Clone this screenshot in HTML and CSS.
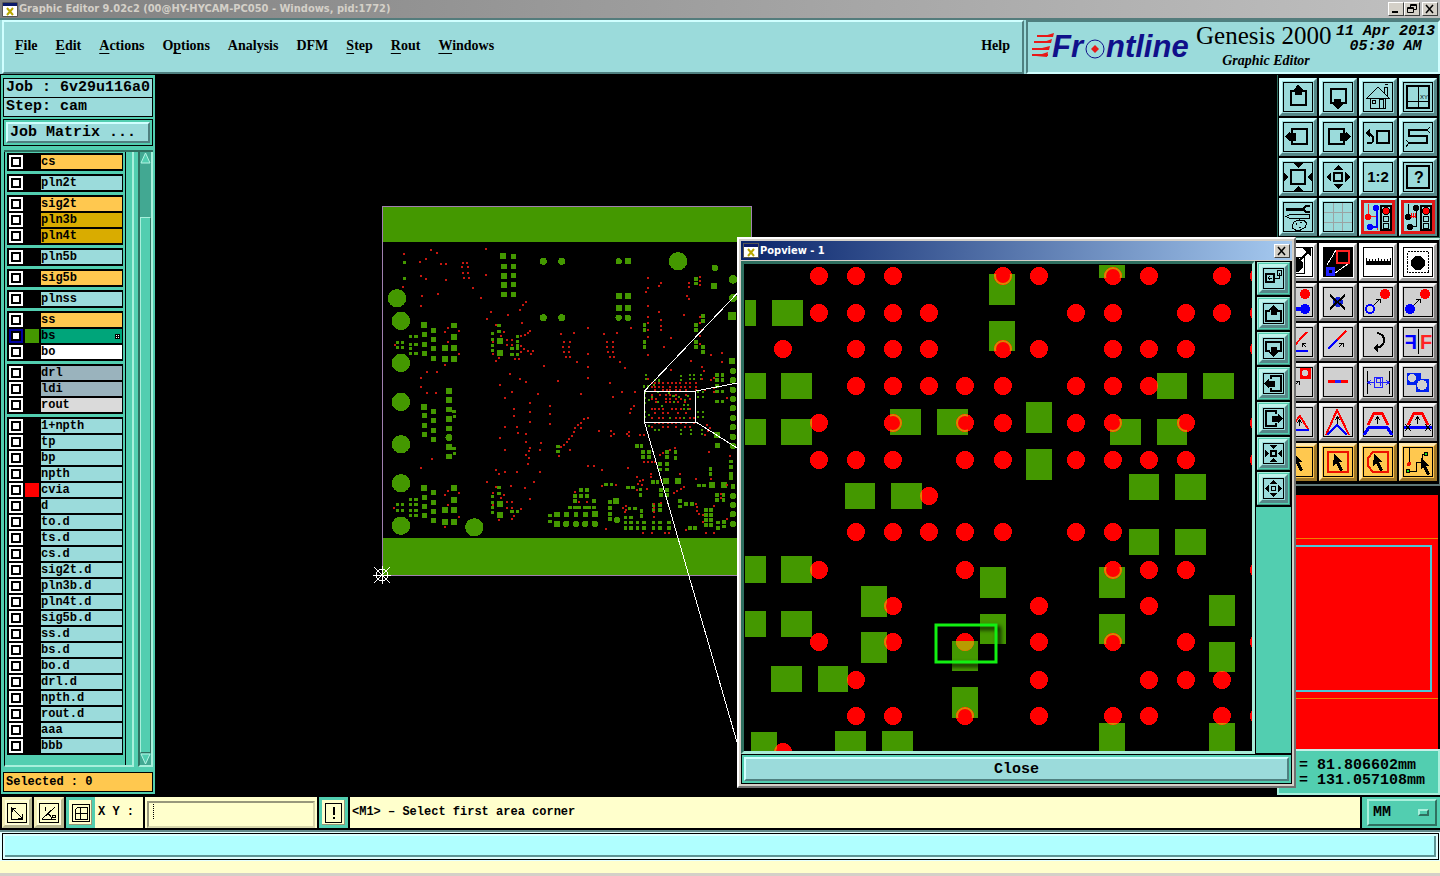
FILE: index.html
```
<!DOCTYPE html>
<html lang="en">
<head>
  <meta charset="utf-8">
  <title>Graphic Editor 9.02c2</title>
  <link rel="stylesheet" href="styles.css">
</head>
<body>
<div class="app">
  <header class="titlebar">
    <svg class="app-icon" viewBox="0 0 16 15"><path fill="#fff" stroke="#555" d="M.5.5h15v14H.5z"/><path fill="#0a1a6a" d="M1 1h14v3H1z"/><path stroke="#b8a800" stroke-width="2" d="M5 6l6 7M11 6l-6 7"/></svg>
    <span class="title">Graphic Editor 9.02c2 (00@HY-HYCAM-PC050 - Windows, pid:1772)</span>
    <div class="win-buttons">
      <button class="win-btn" aria-label="Minimize"><svg viewBox="0 0 12 10"><path fill="#000" d="M2 7h6v2H2z"/></svg></button>
      <button class="win-btn" aria-label="Restore"><svg viewBox="0 0 12 10"><path fill="none" stroke="#000" d="M4.500 3V.5h6v5H8M4 1.500h7M1.500 3.500h6v5h-6zM1 4.500h7"/></svg></button>
      <button class="win-btn last" aria-label="Close"><svg viewBox="0 0 12 10"><path stroke="#000" stroke-width="1.500" d="M2 1l7 8M9 1L2 9"/></svg></button>
    </div>
  </header>

  <div class="topbar">
    <nav class="menubar">
      <button><u>F</u>ile</button>
      <button><u>E</u>dit</button>
      <button><u>A</u>ctions</button>
      <button>O<u>p</u>tions</button>
      <button>Analysis</button>
      <button>DFM</button>
      <button><u>S</u>tep</button>
      <button><u>R</u>out</button>
      <button><u>W</u>indows</button>
      <button class="help">Help</button>
    </nav>
    <div class="brand">
      <svg class="logo" width="162" height="40" viewBox="0 0 162 40">
        <g fill="#e81818">
          <path d="M12 10l10-3-1 4zM9 17l11-4-1 4zM6 23l12-3-1 4zM4 30l12-4-1 5z"/>
          <path d="M5 9h16v2H5zM2 15h17v2H2zM0 22h17v2H0zM0 28h16v2H0z"/>
        </g>
        <g class="logo-text"><text x="20" y="31">Fr</text><text x="74" y="31">ntline</text></g>
        <circle cx="63" cy="23" r="9" fill="none" stroke="#10108a"/>
        <path fill="#e81818" d="M63 19l4 4-4 4-4-4z"/>
      </svg>
      <div class="product">
        <div class="product-name">Genesis 2000</div>
        <div class="product-sub">Graphic Editor</div>
      </div>
      <div class="clock">11 Apr 2013<br>05:30 AM</div>
    </div>
  </div>

  <main class="work">
    <aside class="left">
      <div class="info">Job : 6v29u116a0</div>
      <div class="info step">Step: cam</div>
      <div class="matrix"><button>Job Matrix ...</button></div>
      <div class="layer-pane">
        <div class="layers" id="layers"></div>
        <div class="scroll-track">
          <svg viewBox="0 0 11 12"><path fill="#52ceb0" stroke="#b4f4e4" d="M5.500 1L1 11h9z"/></svg>
          <div class="thumb"></div>
          <svg viewBox="0 0 11 12"><path fill="#52ceb0" stroke="#b4f4e4" d="M5.500 11L1 1h9z"/></svg>
        </div>
      </div>
      <div class="selected">Selected : 0</div>
    </aside>

    <section class="canvas">
      <svg width="1122" height="722" viewBox="0 0 1122 722" shape-rendering="crispEdges">
        <path fill="#449800" d="M227 131h370v36H227zM227 463h370v37H227z"/>
        <path class="outline" d="M227.500 131.500h369v369h-369z"/>
        <g transform="translate(225 125) scale(.333333)" id="boardLeft"></g>
        <g transform="translate(405 125) scale(.333333)" id="boardRight"></g>
        <path class="leader" d="M489.500 316.500h51v31h-51zM489.500 316l93-98M541 316l41-8M541 347l41 26M489.500 347l93 322"/>
        <g class="origin"><circle cx="227" cy="500" r="6"/><path d="M218 500h18M227 491v18M219 492l16 16M235 492l-16 16"/></g>
      </svg>
    </section>

    <aside class="right">
      <div class="tools">
        <button class="tool" aria-label="Pan up"><svg viewBox="0 0 30 30"><path class="box" d="M.5.5h29v29H.5z"/><path class="k2" d="M8 9h15v14H8z"/><path d="M15 2l5 6h-1v5h-7V8h-1z"/></svg></button>
        <button class="tool" aria-label="Pan down"><svg viewBox="0 0 30 30"><path class="box" d="M.5.5h29v29H.5z"/><path class="k2" d="M8 7h15v14H8z"/><path d="M15 28l-5-6h1v-5h7v5h2z"/></svg></button>
        <button class="tool" aria-label="Home"><svg viewBox="0 0 30 30"><path class="box" d="M.5.5h29v29H.5z"/><path class="k1" d="M4 16L15 5l11 11zM7.500 16v10.500h15V16M16.500 26v-9h4v9M9.500 18.500h3v3h-3zM21.500 11V5.500h3V14M22 3l3-1"/></svg></button>
        <button class="tool" aria-label="Origin view"><svg viewBox="0 0 30 30"><path class="box" d="M.5.5h29v29H.5z"/><path class="k2" d="M4 4h22v22H4z"/><path class="k1" d="M15.500 4v22M4 19.500h22"/><text class="tiny" x="17" y="17">XY</text></svg></button>

        <button class="tool" aria-label="Pan left"><svg viewBox="0 0 30 30"><path class="box" d="M.5.5h29v29H.5z"/><path class="k2" d="M9 7h15v15H9z"/><path d="M2 14.500l5-5v1h6v8H7v1z"/></svg></button>
        <button class="tool" aria-label="Pan right"><svg viewBox="0 0 30 30"><path class="box" d="M.5.5h29v29H.5z"/><path class="k2" d="M6 7h15v15H6z"/><path d="M28 14.500l-5-5v1h-6v8h6v1z"/></svg></button>
        <button class="tool" aria-label="Previous view"><svg viewBox="0 0 30 30"><path class="box" d="M.5.5h29v29H.5z"/><path class="k2" d="M14 9h12v12H14z"/><path class="k2" d="M4 21h4q3-1 2-5-1-4-4-4"/><path d="M2 11l5-4v8z"/></svg></button>
        <button class="tool" aria-label="Snake view"><svg viewBox="0 0 30 30"><path class="box" d="M.5.5h29v29H.5z"/><path class="k2" d="M25 8H6v6h18v7H5"/><path class="k1" d="M24 8l3-3M24 8l3 3M6 21l-3-3M6 21l-3 4"/></svg></button>

        <button class="tool" aria-label="Zoom out"><svg viewBox="0 0 30 30"><path class="box" d="M.5.5h29v29H.5z"/><path class="k2" d="M8 8h14v14H8z"/><path d="M10 1h10l-5 5zM10 29h10l-5-5zM1 10v10l4-5zM29 10v10l-4-5z"/></svg></button>
        <button class="tool" aria-label="Zoom in"><svg viewBox="0 0 30 30"><path class="box" d="M.5.5h29v29H.5z"/><path class="k2" d="M11 11h8v8h-8z"/><path d="M10 8h10l-5-5zM10 22h10l-5 5zM8 10v10l-5-5zM22 10v10l5-5z"/></svg></button>
        <button class="tool" aria-label="Actual size"><svg viewBox="0 0 30 30"><path class="box" d="M.5.5h29v29H.5z"/><text class="ratio" x="15" y="20">1:2</text></svg></button>
        <button class="tool" aria-label="Query"><svg viewBox="0 0 30 30"><path class="box" d="M.5.5h29v29H.5z"/><path class="k2" d="M4 4h22v22H4z"/><text class="query" x="16" y="21">?</text></svg></button>

        <button class="tool" aria-label="Setup"><svg viewBox="0 0 30 30"><path class="box" d="M.5.5h29v29H.5z"/><path stroke="#000" stroke-width="3" d="M3 7.500h17"/><path class="k2" d="M27 4h-4l-3 3 3 3h4"/><path class="k1" d="M3 14.500l4-2h19v4H7zM9.500 22.500l2-3 5-1.500 5 1 2 2-1 4-5 3h-5l-3-2z"/><path d="M13 21h1v2h-1zM17 20h2v1h-2zM16 25h2v1h-2z"/></svg></button>
        <button class="tool" aria-label="Grid"><svg viewBox="0 0 30 30"><path class="box" d="M.5.5h29v29H.5z"/><path fill="none" stroke="#9aa4a4" d="M10.500 1v28M19.500 1v28M1 10.500h28M1 20.500h28"/></svg></button>
        <button class="tool alert" aria-label="Net check"><svg viewBox="0 0 30 30"><path fill="none" stroke="#f22" d="M5.500 2v12H14v14"/><path fill="none" stroke="#00f" stroke-width="2" d="M14 5v20H8"/><g fill="#00f"><circle cx="13" cy="6" r="3"/><circle cx="7" cy="25" r="3"/></g><circle cx="5" cy="15" r="3" fill="#f00"/><path class="k2" d="M18 4h10v24H18z"/><circle cx="23" cy="9" r="3.500" fill="#f00" stroke="#000"/><circle class="k1" cx="23" cy="17" r="3"/><circle class="k1" cx="23" cy="24" r="3"/></svg></button>
        <button class="tool alert" aria-label="Short check"><svg viewBox="0 0 30 30"><path class="k1" d="M5.500 2v12H14M13.500 6v18H8"/><circle cx="13" cy="6" r="3"/><circle cx="7" cy="25" r="3"/><circle cx="5" cy="15" r="3"/><path fill="none" stroke="#f00" d="M7 14.500h6M8.500 11v5M10.500 11v5M12.500 11v5"/><path class="k2" d="M18 4h10v24H18z"/><circle cx="23" cy="9" r="3.500" fill="#f00" stroke="#000"/><circle class="k1" cx="23" cy="17" r="3"/><circle class="k1" cx="23" cy="24" r="3"/></svg></button>
      </div>

      <div class="tools edit">
        <button class="tool white" aria-label="Select"><svg viewBox="0 0 30 30"><path class="box" d="M.5.5h29v29H.5z"/><path class="k1" d="M5.500 10.500h16v16h-16z"/><circle cx="13" cy="18" r="7"/><path class="k2" d="M16 14L27 3"/><path d="M28 1v9l-9-9z"/></svg></button>
        <button class="tool white" aria-label="Area"><svg viewBox="0 0 30 30"><path d="M0 0h30v30H0z"/><path fill="none" stroke="#fff" d="M4 18L13 3M12 26l13-9"/><path fill="none" stroke="#f22" stroke-width="2" d="M14 4h12v12H14z"/><path fill="none" stroke="#22f" stroke-width="3" d="M4 21h6v6H4z"/></svg></button>
        <button class="tool white" aria-label="Measure"><svg viewBox="0 0 30 30"><path class="box" d="M.5.5h29v29H.5z"/><path d="M3 14h25v4H3z"/><path class="k1" d="M3.500 11v6M6.500 12v4M9.500 12v4M12.500 12v4M15.500 11v4M18.500 12v4M21.500 12v4M24.500 12v4M27.500 11v6"/></svg></button>
        <button class="tool white" aria-label="Pad"><svg viewBox="0 0 30 30"><path class="box" d="M.5.5h29v29H.5z"/><path class="k1" stroke-dasharray="2 1" d="M4.500 4.500h21v21h-21z"/><circle cx="15" cy="16" r="7"/></svg></button>

        <button class="tool gray" aria-label="Add"><svg viewBox="0 0 30 30"><path class="box" d="M.5.5h29v29H.5z"/><circle cx="22" cy="7" r="5" fill="#f00"/><path fill="#00f" d="M3 20h16v4H3z"/><circle cx="22" cy="22" r="5" fill="#00f"/></svg></button>
        <button class="tool gray" aria-label="Delete"><svg viewBox="0 0 30 30"><path class="box" d="M.5.5h29v29H.5z"/><circle cx="15" cy="15" r="5" fill="#1020d8"/><path class="k2" d="M7 8l15 14M22 8L7 22"/></svg></button>
        <button class="tool gray" aria-label="Copy"><svg viewBox="0 0 30 30"><path class="box" d="M.5.5h29v29H.5z"/><circle cx="22" cy="7" r="5" fill="#f00"/><circle cx="7" cy="22" r="4" fill="none" stroke="#00f" stroke-width="2"/><path class="k1" d="M11 18l6-6M13 12h4v4"/></svg></button>
        <button class="tool gray" aria-label="Move"><svg viewBox="0 0 30 30"><path class="box" d="M.5.5h29v29H.5z"/><circle cx="22" cy="7" r="5" fill="#f00"/><circle cx="7" cy="22" r="5" fill="#00f"/><path class="k1" d="M11 18l6-6M13 12h4v4"/></svg></button>

        <button class="tool gray" aria-label="Angle"><svg viewBox="0 0 30 30"><path class="box" d="M.5.5h29v29H.5z"/><path fill="none" stroke="#f00" stroke-width="2" d="M8 22L24 5"/><path fill="none" stroke="#00f" stroke-width="2" d="M4 24h21"/><path class="k1" d="M23 20l-4-4M19 20v-4h4"/></svg></button>
        <button class="tool gray" aria-label="Stretch"><svg viewBox="0 0 30 30"><path class="box" d="M.5.5h29v29H.5z"/><path fill="none" stroke="#f00" stroke-width="2" d="M14 13l9-9"/><path fill="none" stroke="#00f" stroke-width="2" d="M5 22l9-9"/><path class="k1" d="M16 20l4-4M16 16h4v4"/></svg></button>
        <button class="tool gray" aria-label="Rotate"><svg viewBox="0 0 30 30"><path class="box" d="M.5.5h29v29H.5z"/><path class="k2" d="M14 6q7 1 7 7t-7 8"/><path d="M10 21l5-4v8z"/></svg></button>
        <button class="tool gray" aria-label="Mirror"><svg viewBox="0 0 30 30"><path class="box" d="M.5.5h29v29H.5z"/><path class="k1" d="M15.500 2v25"/><text class="eff" x="17" y="22" fill="#f22">F</text><text class="eff" transform="translate(14 0) scale(-1 1)" x="0" y="22" fill="#00f">F</text></svg></button>

        <button class="tool gray" aria-label="Change"><svg viewBox="0 0 30 30"><path class="box" d="M.5.5h29v29H.5z"/><path fill="#f00" d="M17 1h11v11H17z"/><circle cx="22" cy="6" r="3" fill="#d0d0d0"/><path class="k1" d="M12 18l4-4M12 14h4v4"/></svg></button>
        <button class="tool gray" aria-label="Break"><svg viewBox="0 0 30 30"><path class="box" d="M.5.5h29v29H.5z"/><path stroke="#f00" stroke-width="3" d="M5 14.500h20"/><path stroke="#22f" stroke-width="3" d="M12 14.500h6"/></svg></button>
        <button class="tool gray" aria-label="Spacing"><svg viewBox="0 0 30 30"><path class="box" d="M.5.5h29v29H.5z"/><path class="k1" d="M4.500 4v23M26.500 4v23"/><path fill="none" stroke="#22f" d="M11.500 10.500h8v10h-8zM5 15.500h6M20 15.500h6M8 13l-3 2.500L8 18M23 13l3 2.500-3 2.500M17.500 18.500v-7h-4v4h6"/></svg></button>
        <button class="tool gray" aria-label="Combine"><svg viewBox="0 0 30 30"><path class="box" d="M.5.5h29v29H.5z"/><path fill="#0020f0" d="M4 6h14v12H4zM13 12h13v13H13z"/><g fill="#d0d0d0"><circle cx="9" cy="11" r="4"/><circle cx="19" cy="18" r="5"/></g></svg></button>

        <button class="tool gray" aria-label="Slide"><svg viewBox="0 0 30 30"><path class="box" d="M.5.5h29v29H.5z"/><path fill="none" stroke="#f00" stroke-width="2" d="M6 22L17 9l8 13"/><path fill="none" stroke="#00f" stroke-width="2" d="M2 23h24"/><path class="k1" d="M16.500 19v-5M14 16l2.500-3 2.500 3"/></svg></button>
        <button class="tool gray" aria-label="Peak"><svg viewBox="0 0 30 30"><path class="box" d="M.5.5h29v29H.5z"/><path fill="none" stroke="#f00" stroke-width="2" d="M3 28L14 3l12 25"/><path fill="none" stroke="#00f" stroke-width="2" d="M4 28l10-10 10 10"/><path class="k1" d="M14.500 17v-6M12 13l2.500-3 2.500 3"/></svg></button>
        <button class="tool gray" aria-label="Trapezoid"><svg viewBox="0 0 30 30"><path class="box" d="M.5.5h29v29H.5z"/><path fill="none" stroke="#00f" stroke-width="3" d="M1 28l5-8h18l5 8"/><path fill="none" stroke="#f00" stroke-width="3" d="M5 18l6-12h8l6 12"/><path class="k1" d="M14.500 17v-6M12 13l2.500-3 2.500 3"/></svg></button>
        <button class="tool gray" aria-label="Trim"><svg viewBox="0 0 30 30"><path class="box" d="M.5.5h29v29H.5z"/><path fill="none" stroke="#00f" stroke-width="3" d="M1 20.500h28"/><path fill="none" stroke="#f00" stroke-width="3" d="M5 18l6-12h8l6 12"/><path class="k1" d="M14.500 17v-6M12 13l2.500-3 2.500 3M2 17l6 7M8 17l-6 7M22 17l6 7M28 17l-6 7"/></svg></button>

        <button class="tool amber" aria-label="Pick"><svg viewBox="0 0 30 30"><path class="box" d="M.5.5h29v29H.5z"/><path d="M11 7l9 8h-4l4 8-3 1-4-8-3 3z"/></svg></button>
        <button class="tool amber" aria-label="Pick in box"><svg viewBox="0 0 30 30"><path class="box" d="M.5.5h29v29H.5z"/><path fill="none" stroke="#e10" stroke-width="2" d="M5 5h20v20H5z"/><path d="M11 7l9 8h-4l4 8-3 1-4-8-3 3z"/></svg></button>
        <button class="tool amber" aria-label="Pick in polygon"><svg viewBox="0 0 30 30"><path class="box" d="M.5.5h29v29H.5z"/><path fill="none" stroke="#e10" stroke-width="2" d="M10 5h15v20H10l-5-6V11z"/><path d="M11 7l9 8h-4l4 8-3 1-4-8-3 3z"/></svg></button>
        <button class="tool amber" aria-label="Pick net"><svg viewBox="0 0 30 30"><path class="box" d="M.5.5h29v29H.5z"/><path class="k1" d="M6.500 1v15M6 24h7V15h6V7h4"/><circle cx="6" cy="17" r="2" fill="#e10"/><g fill="#2d2" stroke="#000"><circle cx="5" cy="24" r="2"/><circle cx="23" cy="7" r="2"/></g><path d="M18 11l9 8h-4l4 8-3 1-4-8-2 3z"/></svg></button>
      </div>

      <div class="overview">
        <div class="overview-band"><div class="overview-frame"></div></div>
      </div>
      <div class="coords">X = 81.806602mm<br>Y = 131.057108mm</div>
    </aside>

    <div class="popview">
      <div class="pop-title">
        <svg class="app-icon" viewBox="0 0 16 15"><path fill="#fff" stroke="#555" d="M.5.5h15v14H.5z"/><path fill="#0a1a6a" d="M1 1h14v3H1z"/><path stroke="#b8a800" stroke-width="2" d="M5 6l6 7M11 6l-6 7"/></svg>
        <span>Popview - 1</span>
        <button class="win-btn last" aria-label="Close Popview"><svg viewBox="0 0 12 10"><path stroke="#000" stroke-width="1.500" d="M2 1l7 8M9 1L2 9"/></svg></button>
      </div>
      <div class="pop-body">
        <div class="pop-canvas">
          <svg width="508" height="488" viewBox="744 264 508 488">
            <defs><clipPath id="padClip"><path id="padShape"/></clipPath></defs>
            <path id="pads" fill="#449800" shape-rendering="crispEdges"/>
            <g id="vias" fill="#f00" shape-rendering="crispEdges"></g>
            <g id="rings" clip-path="url(#padClip)"></g>
            <rect class="marker" x="936" y="625" width="60" height="37"/>
          </svg>
        </div>
        <div class="pop-tools">
          <div class="cell"><button class="tool small" aria-label="Source"><svg viewBox="0 0 21 21"><path class="box" d="M.5.500h20v20H.5z"/><path class="k2" d="M3 6h8v8H3z"/><path class="k1" d="M5 10h4M7 8l-2 2 2 2M14.500 2.500h4v5h-4zM16.500 5v5H12"/></svg></button></div>
          <div class="cell"><button class="tool small" aria-label="Up"><svg viewBox="0 0 21 21"><path class="box" d="M.5.500h20v20H.5z"/><path class="k2" d="M7 8H3v10h15V8h-4"/><path d="M10.500 2l5 5h-2v5h-6V7h-2z"/></svg></button></div>
          <div class="cell"><button class="tool small" aria-label="Down"><svg viewBox="0 0 21 21"><path class="box" d="M.5.500h20v20H.5z"/><path class="k2" d="M7 13H3V4h15v9h-4"/><path d="M10.500 19l5-5h-2V9h-6v5h-2z"/></svg></button></div>
          <div class="cell"><button class="tool small" aria-label="Left"><svg viewBox="0 0 21 21"><path class="box" d="M.5.500h20v20H.5z"/><path class="k2" d="M8 6V3h10v15H8v-3"/><path d="M1 10.500l5-5v2h6v6H6v2z"/></svg></button></div>
          <div class="cell"><button class="tool small" aria-label="Right"><svg viewBox="0 0 21 21"><path class="box" d="M.5.500h20v20H.5z"/><path class="k2" d="M13 6V3H3v15h10v-3"/><path d="M20 10.500l-5-5v2H9v6h6v2z"/></svg></button></div>
          <div class="cell"><button class="tool small" aria-label="Shrink"><svg viewBox="0 0 21 21"><path class="box" d="M.5.500h20v20H.5z"/><path class="k2" d="M8 8h5v5H8z"/><path d="M6 2h9l-4.500 4zM6 19h9l-4.500-4zM2 6v9l4-4.500zM19 6v9l-4-4.500z"/></svg></button></div>
          <div class="cell"><button class="tool small" aria-label="Grow"><svg viewBox="0 0 21 21"><path class="box" d="M.5.500h20v20H.5z"/><path class="k1" d="M8.500 8.500h4v4h-4z"/><path d="M6 6h9l-4.500-4zM6 15h9l-4.500 4zM6 6v9l-4-4.500zM15 6v9l4-4.500z"/></svg></button></div>
        </div>
      </div>
      <div class="pop-close"><button>Close</button></div>
    </div>
  </main>

  <div class="statusbar">
    <button class="snap" aria-label="Snap line"><svg viewBox="0 0 20 20"><path class="box" d="M.5.500h19v19H.5z"/><path class="k1" d="M4.500 4v12.500H16M5 5l10 10M5 9V5h4M15 11v4h-4"/></svg></button>
    <button class="snap" aria-label="Snap angle"><svg viewBox="0 0 20 20"><path class="box" d="M.5.500h19v19H.5z"/><path class="k1" d="M3 16L16 4M3 16.500h14M6.500 4v4M9 11q4 2 3 5M13.500 12.500h3v2h-3z"/></svg></button>
    <button class="snap on" aria-label="Snap grid"><svg viewBox="0 0 18 20"><path class="box" d="M.5 1.500h17v17H.5z"/><path class="k1" d="M6 4h9v12H3V7zM8.500 4v12M3 10.500h12"/></svg></button>
    <label class="xy" for="xyInput">X Y :</label>
    <div class="xy-field"><input type="text" id="xyInput"></div>
    <button class="snap on" aria-label="Alert"><svg viewBox="0 0 18 20"><path class="box" d="M.5.500h16v19H.5z"/><path d="M8 4h2v8H8zM8 14h2v2H8z"/></svg></button>
    <div class="message">&lt;M1&gt; &ndash; Select first area corner</div>
    <div class="units"><button>MM<i></i></button></div>
  </div>
  <div class="command"><div></div></div>
  <div class="footer-line"></div>
</div>
<script src="script.js"></script>
</body>
</html>
```
FILE: styles.css
```
* {
  box-sizing: border-box;
}

body {
  margin: 0;
  background: #ffffcc;
  font-family: "Liberation Mono", monospace;
  color: #000;
}

button {
  font: inherit;
  color: inherit;
  padding: 0;
  margin: 0;
  border: 0;
  background: none;
}

svg {
  display: block;
}

.app {
  display: flex;
  flex-direction: column;
  height: 100vh;
  overflow: hidden;
}

/* window title */
.titlebar {
  display: flex;
  align-items: center;
  flex: none;
  height: 20px;
  padding: 0 2px;
  gap: 1px;
  background: linear-gradient(90deg, #808080, #c0c0c0);
  border-bottom: 2px solid #547c7c;
  color: #d4d0c8;
}

.app-icon {
  width: 16px;
  height: 15px;
}

.title,
.pop-title span {
  flex: 1;
  font: bold 11px/18px "DejaVu Sans Condensed", "DejaVu Sans", sans-serif;
  white-space: nowrap;
}

.win-buttons {
  display: flex;
}

.win-btn {
  width: 16px;
  height: 14px;
  background: #d4d0c8;
  border: 1px solid;
  border-color: #fff #404040 #404040 #fff;
}

.win-btn svg {
  width: 12px;
  height: 10px;
  margin: 0 auto;
}

.win-buttons .last {
  margin-left: 2px;
}

/* menu and brand */
.topbar {
  display: flex;
  flex: none;
  height: 55px;
  background: #9bdbdb;
  border-bottom: 1px solid #000;
}

.menubar {
  display: flex;
  align-items: center;
  flex: 1;
  gap: 18px;
  padding: 0 12px 2px 11px;
  margin: 0 2px;
  border: 2px solid;
  border-color: #d0ffff #4f8080 #4f8080 #d0ffff;
  font: bold 14px "Liberation Serif", serif;
}

.menubar u {
  text-underline-offset: 3px;
}

.menubar .help {
  margin-left: auto;
}

.brand {
  display: flex;
  width: 414px;
  padding: 0 0 0 4px;
  border: 2px solid;
  border-color: #4f8080 #d0ffff #d0ffff #4f8080;
}

.logo {
  margin-top: 4px;
  flex: none;
}

.logo-text {
  font: italic bold 31px "Liberation Sans", sans-serif;
  fill: #10108a;
}

.product {
  width: 142px;
  padding-left: 2px;
  font-family: "Liberation Serif", serif;
  white-space: nowrap;
}

.product-name {
  font-size: 25px;
  line-height: 28px;
}

.product-sub {
  font: italic bold 14px/22px "Liberation Serif", serif;
  text-align: center;
}

.clock {
  font: italic bold 15px/15px "Liberation Mono", monospace;
  text-align: center;
  white-space: nowrap;
  padding-top: 2px;
}

/* main work area */
.work {
  position: relative;
  display: flex;
  flex: 1;
  min-height: 0;
  background: #000;
}

.left {
  display: flex;
  flex-direction: column;
  width: 155px;
  flex: none;
  padding: 3px 2px 2px 2px;
  margin-bottom: 2px;
  background: #52ceb0;
  border-left: 1px solid #000;
}

.info {
  height: 20px;
  padding-left: 2px;
  border: 1px solid #000;
  background: #9bdbdb;
  font-size: 15px;
  line-height: 18px;
  font-weight: bold;
  white-space: nowrap;
}

.step {
  margin-top: -1px;
}

.matrix {
  height: 27px;
  margin-top: 2px;
  padding: 2px;
  border: 1px solid #000;
}

.matrix button {
  width: 100%;
  height: 21px;
  padding-left: 2px;
  text-align: left;
  background: #9bdbdb;
  border: 2px solid;
  border-color: #d0ffff #4f8080 #4f8080 #d0ffff;
  font-size: 15px;
  font-weight: bold;
  line-height: 16px;
}

.layer-pane {
  display: flex;
  flex: 1;
  gap: 4px;
  min-height: 0;
  margin: 4px 0 5px 1px;
  border-top: 2px solid #2f7060;
}

.layers {
  display: flex;
  flex-direction: column;
  flex: 1;
  gap: 3px;
  padding: 1px 9px 0 2px;
  overflow: hidden;
  border: solid;
  border-width: 0 2px 2px 1px;
  border-color: #000 #a8f0dc #a8f0dc #000;
  background: linear-gradient(#000, #000) right 6px top / 1px 100% no-repeat;
}

.layer-group {
  background: #000;
  padding: 1px 1px 1px 2px;
}

.layer {
  display: flex;
  gap: 2px;
  height: 16px;
  padding: 1px 0;
}

.layer input {
  appearance: none;
  width: 14px;
  height: 14px;
  margin: 0;
  flex: none;
  background: #fff;
  border: 2px solid #fff;
  outline: 2px solid #000;
  outline-offset: -4px;
}

.layer input:checked {
  border-color: #0000a0;
}

.swatch {
  width: 14px;
}

.layer label {
  flex: 1;
  font-size: 12px;
  line-height: 14px;
  font-weight: bold;
  background: #9bdbdb;
}

.layer .signal {
  background: #ffc84f;
}

.layer .plane {
  background: #d9ac00;
}

.layer .work-layer {
  display: flex;
  justify-content: space-between;
  align-items: center;
  background: #00a57a;
}

.work-layer svg {
  width: 5px;
  margin-right: 2px;
}

.layer .blank {
  background: #fff;
}

.layer .drill {
  background: #9ab3bd;
}

.layer .rout {
  background: #dadada;
}

.scroll-track {
  display: flex;
  flex-direction: column;
  width: 15px;
  background: #42a892;
  border: 2px solid;
  border-color: #2f7060 #a8f0dc #a8f0dc #2f7060;
  border-top: 0;
}

.scroll-track svg {
  width: 11px;
  height: 12px;
}

.thumb {
  flex: 1;
  margin-top: 53px;
  background: #52ceb0;
  border: 1px solid;
  border-color: #a8f0dc #2f7060 #2f7060 #a8f0dc;
}

.selected {
  height: 20px;
  padding-left: 2px;
  border: 1px solid #000;
  background: #ffc84f;
  font-size: 12px;
  line-height: 19px;
  font-weight: bold;
}

/* board view */
.canvas {
  flex: 1;
  min-width: 0;
  overflow: hidden;
}

.outline {
  fill: none;
  stroke: #a080b0;
}

.leader,
.origin {
  fill: none;
  stroke: #fff;
}

.pad {
  fill: none;
  stroke: #449800;
}

.hole {
  fill: none;
  stroke: #c81810;
}

/* tool panels */
.right {
  display: flex;
  flex-direction: column;
  width: 163px;
  flex: none;
  padding-bottom: 1px;
}

.tools {
  display: grid;
  grid-template-columns: repeat(4, 38px);
  gap: 2px;
  padding: 3px 0 1px 1px;
  border: 1px solid #2f7060;
  border-top: 0;
}

.edit {
  padding: 3px 0 3px 1px;
  border: 1px solid #607878;
  border-top: 2px solid #c8f0e8;
  border-bottom-width: 2px;
}

.tool {
  width: 38px;
  height: 38px;
  padding: 1px;
  background: #9bdbdb;
  border: 3px solid;
  border-color: #d0ffff #568888 #568888 #d0ffff;
}

.tool svg {
  width: 30px;
  height: 30px;
  shape-rendering: crispEdges;
}

.alert {
  outline: 3px solid #e01818;
  outline-offset: -5px;
}

.white {
  background: #fff;
  border-color: #fff #a0a0a0 #a0a0a0 #fff;
}

.gray {
  background: #d0d0d0;
  border-color: #f4f4f4 #808080 #808080 #f4f4f4;
}

.amber {
  background: #ffc84f;
  border-color: #ffe8b0 #a07828 #a07828 #ffe8b0;
}

.box,
.k1 {
  fill: none;
  stroke: #000;
}

.k2 {
  fill: none;
  stroke: #000;
  stroke-width: 2px;
}

.tiny {
  font: 6px "Liberation Sans", sans-serif;
}

.ratio {
  font: bold 15px "Liberation Sans", sans-serif;
  text-anchor: middle;
}

.query {
  font: bold 16px "Liberation Sans", sans-serif;
  text-anchor: middle;
}

.eff {
  font: bold 20px "Liberation Sans", sans-serif;
}

.overview {
  flex: 1;
  display: flex;
  align-items: center;
  margin: 9px 2px 0 0;
  background: #f00;
}

.overview-band {
  flex: 1;
  padding: 6px;
  border: solid #f08000;
  border-width: 1px 0;
  margin-bottom: 8px;
}

.overview-frame {
  height: 147px;
  border: 2px solid #4cc8d8;
}

.coords {
  height: 46px;
  padding: 7px 0 0 2px;
  border: 2px solid;
  border-color: #c8f0e8 #a8f0dc #a8f0dc;
  background: #52ceb0;
  font-size: 15px;
  line-height: 15px;
  font-weight: bold;
  white-space: nowrap;
}

/* popview window */
.popview {
  position: absolute;
  left: 737px;
  top: 162px;
  width: 559px;
  height: 551px;
  display: flex;
  flex-direction: column;
  padding: 2px;
  background: #d4d0c8;
  border: 2px solid;
  border-color: #fff #707070 #707070 #fff;
}

.pop-title {
  display: flex;
  align-items: center;
  gap: 1px;
  height: 20px;
  flex: none;
  padding: 0 2px;
  background: linear-gradient(90deg, #0a246a, #a6caf0);
  border-bottom: 1px solid #d4d0c8;
  color: #fff;
}

.pop-body {
  display: flex;
  flex: 1;
  min-height: 0;
}

.pop-canvas {
  flex: 1;
  overflow: hidden;
  background: #000;
  border: 3px solid;
  border-color: #2f7060 #a8ecd8 #a8ecd8 #2f7060;
}

.pop-tools {
  display: flex;
  flex-direction: column;
  gap: 2px;
  padding: 1px 1px 0;
  border: 1px solid #000;
  border-top: 0;
  background: linear-gradient(#000, #000) 0 0 / 100% 246px no-repeat #52ceb0;
}

.cell {
  width: 33px;
  height: 33px;
  padding: 1px;
  background: #52ceb0;
  border: 1px solid;
  border-color: #a8f0dc #3b9480 #3b9480 #a8f0dc;
}

.small {
  width: 29px;
  height: 29px;
  border-color: #c0f4ec #568888 #568888 #c0f4ec;
}

.small svg {
  width: 21px;
  height: 21px;
}

.pop-close {
  flex: none;
  height: 30px;
  padding: 2px;
  border: 1px solid #000;
  background: #52ceb0;
}

.pop-close button {
  width: 100%;
  height: 24px;
  padding-top: 2px;
  background: #9bdbdb;
  border: 2px solid;
  border-color: #d0ffff #4f8080 #4f8080 #d0ffff;
  font-size: 15px;
  font-weight: bold;
  line-height: 18px;
}

.marker {
  fill: none;
  stroke: #12f012;
  stroke-width: 3px;
  filter: drop-shadow(3px 3px 2px #000);
}

/* bottom rows */
.statusbar {
  display: flex;
  flex: none;
  height: 34px;
  gap: 2px;
  padding: 1px 0 2px 2px;
  background: #000;
  font-size: 12px;
  font-weight: bold;
  line-height: 30px;
}

.snap {
  width: 30px;
  height: 31px;
  padding: 2px;
  background: #ffffcc;
  border: 3px solid #f4f0b8;
  border-right-color: #b8b890;
  border-bottom-color: #b8b890;
  box-shadow: inset 0 0 0 1px #ffffe0;
}

.snap svg {
  width: 20px;
  height: 20px;
  margin: auto;
  shape-rendering: crispEdges;
}

.on {
  width: 29px;
  border: 3px solid #52ceb0;
  box-shadow: inset -1px -1px #989878;
}

.xy {
  width: 48px;
  padding-left: 3px;
  margin-left: -2px;
  background: #ffffcc;
  white-space: nowrap;
}

.xy-field {
  width: 172px;
  padding: 2px;
  background: #ffffcc;
}

.xy-field input {
  width: 100%;
  height: 27px;
  padding: 2px 4px;
  background: repeating-linear-gradient(#000 0 1px, transparent 1px 2px) 4px 1px / 1px 16px no-repeat #ffffcc;
  border: 2px solid;
  border-color: #98987c #d8d8ac #d8d8ac #98987c;
  font: inherit;
  outline: 0;
}

.message {
  flex: 1;
  padding-left: 2px;
  background: #ffffcc;
  white-space: nowrap;
}

.units {
  width: 78px;
  padding: 2px 3px 2px 5px;
  background: #52ceb0;
}

.units button {
  display: flex;
  align-items: center;
  justify-content: space-between;
  width: 100%;
  height: 27px;
  padding: 0 6px 0 4px;
  border: 2px solid;
  border-color: #a8f0dc #2f7060 #2f7060 #a8f0dc;
  font-size: 15px;
}

.units i {
  width: 11px;
  height: 7px;
  border: 2px solid;
  border-color: #a8f0dc #2f7060 #2f7060 #a8f0dc;
}

.command {
  flex: none;
  height: 31px;
  padding: 2px 1px 1px;
  background: #e4ffff;
  border-top: 2px solid #648c8c;
}

.command div {
  height: 27px;
  margin: -1px 0 0 1px;
  background: #b0ffff;
  border: 1px solid #000;
  box-shadow: inset 2px 2px #d8ffff, inset -2px -2px #e0ffff, inset -4px -4px #5c9494;
}

.footer-line {
  flex: none;
  height: 15px;
  background: #ffffcc;
  border-bottom: 3px solid #d4d0c8;
}
```
FILE: script.js
```
// layer list: [name, class], one array per framed group
var groups = [
  [['cs', 'signal']],
  [['pln2t', '']],
  [['sig2t', 'signal'], ['pln3b', 'plane'], ['pln4t', 'plane']],
  [['pln5b', '']],
  [['sig5b', 'signal']],
  [['plnss', '']],
  [['ss', 'signal'], ['bs', 'work-layer'], ['bo', 'blank']],
  [['drl', 'drill'], ['ldi', 'drill'], ['rout', 'rout']],
  ['1+npth', 'tp', 'bp', 'npth', 'cvia', 'd', 'to.d', 'ts.d', 'cs.d', 'sig2t.d', 'pln3b.d',
    'pln4t.d', 'sig5b.d', 'ss.d', 'bs.d', 'bo.d', 'drl.d', 'npth.d', 'rout.d', 'aaa', 'bbb'
  ].map(function (n) { return [n, '']; })
];
var colors = { bs: '#449800', cvia: '#ff0000' };

document.getElementById('layers').innerHTML = groups.map(function (group) {
  return '<div class="layer-group">' + group.map(function (l) {
    var id = 'layer-' + l[0];
    var color = colors[l[0]] ? ' style="background:' + colors[l[0]] + '"' : '';
    var mark = l[0] === 'bs' ? '<svg viewBox="0 0 5 5"><path d="M0 0h5v5H0z"/><path fill="#fff" d="M1 1h1v1H1zM3 1h1v1H3zM1 3h1v1H1zM3 3h1v1H3z"/></svg>' : '';
    return '<div class="layer"><input type="checkbox" id="' + id + '"' + (l[0] === 'bs' ? ' checked' : '') + '>' +
      '<span class="swatch"' + color + '></span>' +
      '<label for="' + id + '" class="' + l[1] + '">' + l[0] + mark + '</label></div>';
  }).join('') + '</div>';
}).join('');

// draws a list of "x,y" points as square or round dots
function dots(target, cls, size, cap, points) {
  var d = points.trim().split(/\s+/).map(function (p) {
    return 'M' + p.replace(',', ' ') + 'h.01';
  }).join('');
  document.getElementById(target).insertAdjacentHTML('beforeend',
    '<path class="' + cls + '" stroke-width="' + size + '" stroke-linecap="' + cap + '" d="' + d + '"/>');
}

// same y for a whole row of x values
function row(y, xs) {
  return xs.split(' ').map(function (x) { return x + ',' + y; }).join(' ') + ' ';
}

// left half of the board
dots('boardLeft', 'pad', 55, 'round', '51,295 63,363 63,489 63,606 63,733 63,850 63,977 283,982');
dots('boardLeft', 'pad', 21, 'round', '490,184 490,353 545,184 545,353 372,228 372,255 531,972 207,573 207,600 207,657 207,713 207,741');
dots('boardLeft', 'pad', 18, 'square', '132,375 132,620 132,864 222,411 222,444 194,444 194,477 222,477 222,864 222,900 222,930 194,930 194,966 222,966 360,423 360,459 360,912 360,945 370,169');
dots('boardLeft', 'pad', 15, 'square', '133,404 133,433 133,460 160,391 160,418 160,446 160,475 133,648 133,676 133,705 160,634 160,663 160,691 160,718 133,892 133,920 133,948 160,879 160,907 160,934 160,963 222,377 207,629 207,685 207,769 400,171 372,199 400,199 400,228 400,255 372,283 400,283 531,943 559,943 559,972');
dots('boardLeft', 'pad', 9, 'square', '52,428 68,428 52,443 68,443 92,411 108,411 92,434 108,434 92,446 92,460 108,460 52,915 68,915 52,931 68,931 92,899 108,899 92,914 108,914 92,931 108,931 92,948 108,948 222,634 223,651 222,745 223,762 73,187 73,237 337,402 337,420 337,436 337,453 357,378 357,394 396,447 412,447 396,464 412,464 412,411 412,425 412,437 337,890 337,908 337,924 337,939 357,864 357,882 396,934 412,934 510,948 510,965 534,741 534,756');
dots('boardLeft', 'hole', 6, 'square', '72,162 153,150 171,159 138,177 120,186 183,192 198,192 249,189 261,189 246,201 264,201 249,219 264,219 252,234 267,234 123,228 138,237 198,240 69,261 279,264 318,147 318,225 126,288 174,282 303,294 123,318 333,336 321,357 384,345 420,330 429,315 438,306 426,369 45,435 195,396 204,384 204,426 237,393 237,462 195,495 141,516 171,516 123,534 123,561 141,579 168,579 156,777 123,804 42,924 195,885 204,873 204,915 237,879 237,951 195,981');
dots('boardLeft', 'hole', 6, 'square', '348,375 372,396 363,408 339,426 339,462 348,483 357,474 381,420 396,420 381,434 396,434 423,408 435,405 444,399 450,393 423,438 432,447 444,453 459,453 453,462 405,477 417,477 423,456 492,498 390,522 360,555 420,537 438,546 396,576 474,582 534,543 375,594 450,609 402,627 510,618 402,648 450,636 510,642 450,666 510,672 375,681 411,681 414,699 438,702 360,714 438,726 450,744 483,729 375,750 447,753 480,750 438,765 447,774 444,792 348,810 357,822 375,816 411,816 480,816 321,846 393,858 435,864 462,846 348,861 339,879 372,885 363,894 339,915 381,906 396,906 381,924 396,924 450,897 423,927 402,948 396,957 357,960 537,768');

// right half of the board
dots('boardRight', 'pad', 55, 'round', '354,184');
dots('boardRight', 'pad', 26, 'round', '519,238 519,294');
dots('boardRight', 'pad', 24, 'square', '517,349');
dots('boardRight', 'pad', 19, 'round', '176,184 176,353 204,353 465,203 171,960 19,972 48,972 76,972 104,972 519,513 519,541 519,569 519,597 519,625 519,654 519,682 519,710 519,738 519,888 519,915 519,943 519,972');
dots('boardRight', 'pad', 18, 'square', '176,288 203,288 176,324 203,324 203,183 463,258 517,483 471,705 318,843 354,843 456,856 492,856 169,904 104,942');
dots('boardRight', 'pad', 14, 'square', '19,943 48,943 76,943 513,822 513,832 519,859 472,736');
dots('boardRight', 'pad', 10, 'square', '254,375 254,390 254,426 254,441 408,237 408,251 408,375 408,390 408,426 408,441 429,348 429,363 429,441 429,456 471,525 487,525 471,540 487,540 471,558 471,575 487,575 471,605 487,605 231,738 245,738 249,756 249,771 267,756 267,771 321,756 321,771 346,756 346,774 300,792 300,808 321,792 321,808 279,846 292,846 321,870 321,885 303,870 303,885 417,856 432,856 451,807 451,822 204,862 219,862 241,868 241,885 138,853 155,853 63,870 81,870 45,888 63,888 81,888 45,903 102,903 150,906 150,924 150,942 150,957 208,926 225,926 244,933 244,948 197,953 213,953 281,915 281,930 300,915 300,930 360,903 360,920 378,912 396,912 438,930 453,930 438,945 453,945 438,960 453,960 438,975 453,975 471,885 490,885 471,900 490,900 390,984 405,984 474,968 474,984 492,966 492,980 513,785 513,801 ' +
  row(922, '30 45 57 75 87 102') + row(968, '197 213 232 252 281 300 327') + row(984, '197 213 232 252 281 300 327'));
dots('boardRight', 'pad', 7, 'square', '258,525 258,537 363,528 363,540 390,525 402,525 390,538 402,538 423,525 423,537 252,560 264,560 255,580 255,594 255,609 255,636 255,651 414,576 429,576 414,591 429,591 414,636 429,636 414,651 429,651 363,690 363,703 393,690 393,703 426,690 426,703 267,678 285,690 297,690 282,555 297,542 285,540 276,590 294,606 306,618 342,606 327,580 357,591 372,616 384,616 375,600 384,588 372,628 384,628 294,576 340,588 330,654 372,654 267,600 267,645');
dots('boardRight', 'hole', 6, 'square', '264,234 264,264 258,276 297,258 303,249 387,249 387,261 420,231 420,243 420,255 381,288 387,297 264,318 297,336 303,360 303,378 372,345 303,390 264,351 264,369 264,390 264,411 333,414 312,441 264,465 420,351 420,369 426,390 420,408 420,432 453,465 486,459 486,486 393,483 426,501 433,514 333,510 84,384 42,399 3,402 213,384 171,399 132,402 12,426 30,426 9,441 27,441 12,456 27,456 18,470 30,470 141,426 159,426 141,441 159,441 144,456 159,456 150,470 162,470 51,486 84,462 84,501 180,486 195,504 84,534 150,549 63,582 159,591 186,576 225,576 222,618 213,627 210,639 84,654 72,657 63,669 54,675 45,684 63,684 42,696 36,708 27,717 21,726 12,735 3,741 30,750 117,693 153,693 153,708 162,702 201,702 207,696 207,708 240,705 252,705');
dots('boardRight', 'hole', 6, 'square', '84,798 102,798 126,810 204,804 447,756 510,768 300,765 309,759 330,750 345,744 252,786 264,786 276,786 285,786 273,822 273,831 231,831 240,843 246,855 249,840 234,852 231,870 261,867 360,822 408,837 372,861 363,867 351,873 342,879 303,840 45,876 57,906 81,906 126,858 168,855 189,924 198,918 198,930 195,936 138,987 249,999 276,999 315,999 327,999 378,990 438,999 462,999 282,912 282,924 282,936 282,951 303,909 408,912 411,921 411,933 417,942 429,945 429,966 483,882 483,894 501,957 462,918 453,837 501,594 501,855 462,534 453,540 462,564 462,576 441,675 450,684 444,693 435,705');
dots('boardRight', 'hole', 6, 'square',
  row(537, '264 426') + row(549, '276 285 297 309 324 336 348 360 378 390 408') +
  row(560, '276 285 297 309 330 348 363 375 390 408') + row(570, '285 309 320 330 348 360 378 408 435') +
  row(584, '276 300 318 330 348 378') + row(596, '276 288 318 330 348 363 390') +
  row(606, '288 318 330 354 375') + row(627, '276 285 297 309 336 348 363 390') +
  row(639, '285 309 324 354 378') + row(655, '276 297 309 348 360 390 402') +
  row(669, '285 297 309 324 336 348 363 378 402') + row(681, '276 309 324 348 375 390'));

// popview pads: x, y, width, height
var pads = [
  [745, 300, 11, 26], [772, 300, 31, 26], [745, 373, 21, 26], [781, 373, 31, 26], [745, 419, 21, 26], [781, 419, 31, 26],
  [890, 409, 31, 26], [937, 409, 31, 26], [845, 483, 30, 26], [891, 483, 31, 26], [989, 274, 26, 31], [989, 321, 26, 30],
  [1026, 402, 26, 31], [1026, 449, 26, 31], [1099, 265, 26, 13], [1157, 373, 30, 26], [1203, 373, 31, 26],
  [1110, 419, 31, 26], [1157, 419, 30, 26], [1129, 474, 30, 26], [1175, 474, 31, 26], [745, 556, 21, 27], [781, 556, 31, 27],
  [745, 611, 21, 26], [781, 611, 31, 26], [861, 586, 26, 31], [861, 632, 26, 31], [980, 567, 26, 31], [980, 614, 26, 30],
  [952, 641, 26, 30], [952, 687, 26, 31], [771, 666, 31, 26], [818, 666, 30, 26], [751, 732, 26, 20], [835, 731, 31, 21],
  [882, 731, 31, 21], [1129, 529, 30, 26], [1175, 529, 31, 26], [1099, 567, 26, 31], [1099, 614, 26, 30],
  [1209, 595, 26, 31], [1209, 642, 26, 30], [1099, 723, 26, 29], [1209, 723, 26, 29]
];
var padPath = pads.map(function (p) {
  return 'M' + p[0] + ' ' + p[1] + 'h' + p[2] + 'v' + p[3] + 'h-' + p[2] + 'z';
}).join('');
document.getElementById('pads').setAttribute('d', padPath);
document.getElementById('padShape').setAttribute('d', padPath);

var vias = {
  276: [819, 856, 893, 1003, 1039, 1113, 1149, 1222, 1259],
  313: [819, 856, 893, 929, 1076, 1113, 1186, 1222, 1259],
  349: [783, 856, 893, 929, 1003, 1039, 1113, 1149, 1186, 1259],
  386: [856, 893, 929, 965, 1003, 1076, 1113, 1149],
  423: [819, 893, 965, 1003, 1076, 1113, 1186, 1259],
  460: [819, 856, 893, 965, 1003, 1076, 1113, 1149, 1186, 1259],
  496: [929],
  532: [856, 893, 929, 965, 1003, 1076, 1113],
  570: [819, 965, 1113, 1149, 1186, 1259],
  606: [893, 1039, 1149],
  642: [819, 893, 965, 1039, 1113, 1186, 1259],
  680: [856, 1039, 1149, 1186, 1222],
  716: [856, 893, 965, 1039, 1113, 1149, 1222, 1259],
  752: [783]
};
var circles = '', rings = '';
Object.keys(vias).forEach(function (y) {
  vias[y].forEach(function (x) {
    circles += '<circle cx="' + x + '" cy="' + y + '" r="9"/>';
    rings += '<circle cx="' + x + '" cy="' + y + '" r="8" fill="none" stroke="#d88800" stroke-width="2"/>';
  });
});
document.getElementById('vias').innerHTML = circles;
document.getElementById('rings').innerHTML = rings + '<circle cx="965" cy="642" r="9" fill="#b89b00"/>';
```
